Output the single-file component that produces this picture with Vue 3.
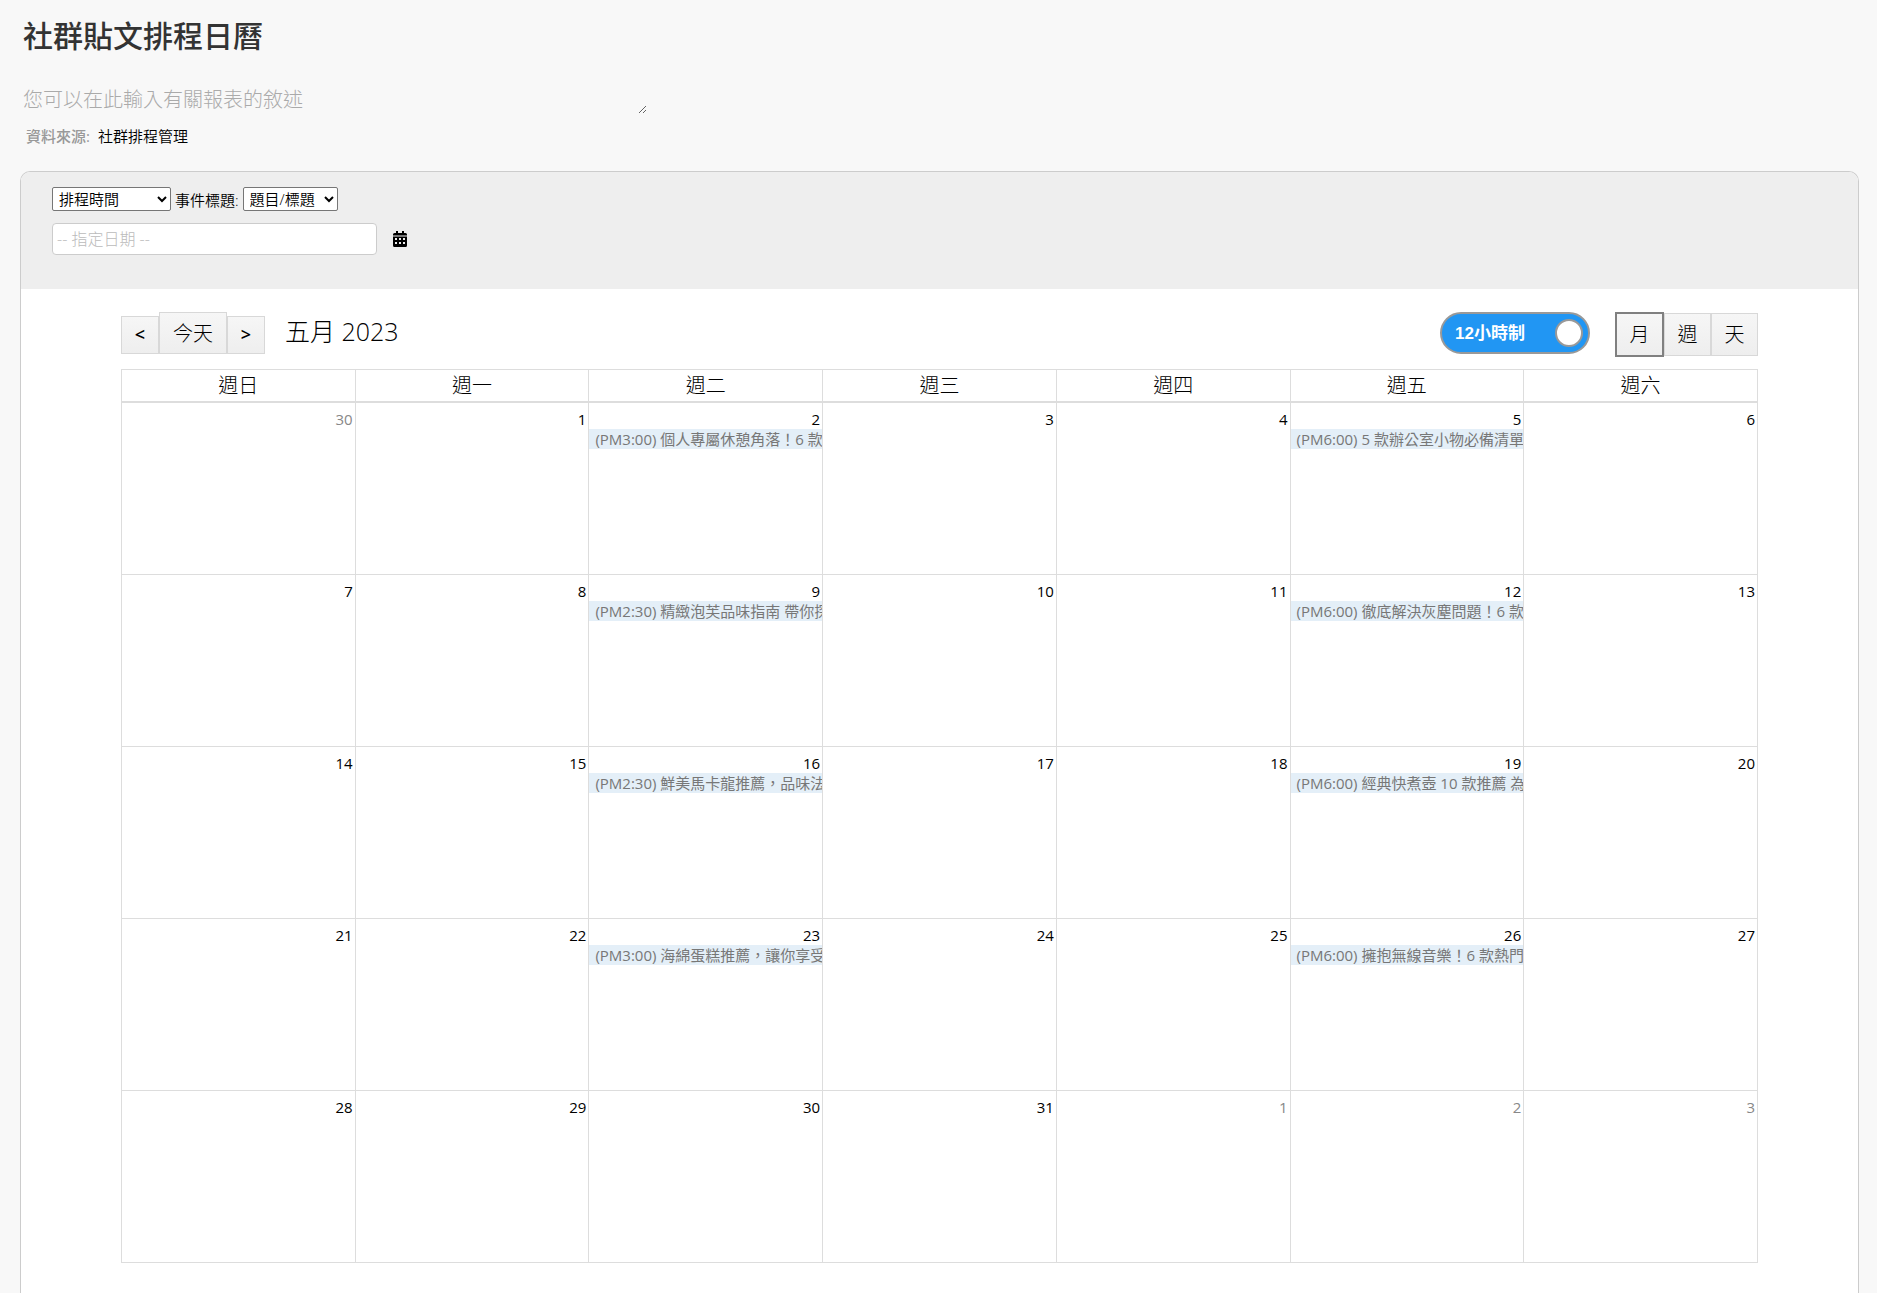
<template>
  <div class="report-page">
    <header class="report-header">
      <h1 class="report-title">社群貼文排程日曆</h1>
      <textarea
        v-model="description"
        class="report-desc"
        placeholder="您可以在此輸入有關報表的敘述"
        aria-label="報表敘述"
      ></textarea>
      <div class="report-source">
        <strong>資料來源:</strong>
        <a href="#">社群排程管理</a>
      </div>
    </header>

    <main class="panel">
      <div class="filters">
        <div class="filter-row">
          <select v-model="dateField" class="select-date" aria-label="日期欄位">
            <option>排程時間</option>
          </select>
          <label for="event-title">事件標題:</label>
          <select id="event-title" v-model="titleField" class="select-title">
            <option>題目/標題</option>
          </select>
        </div>
        <div class="filter-row">
          <input v-model="targetDate" class="date-input" type="text" placeholder="-- 指定日期 --" aria-label="指定日期">
          <button class="btn-icon" type="button" aria-label="選擇日期">
            <svg viewBox="0 0 14 16" width="14" height="16">
              <path d="M3 0h2v2h4V0h2v2h1.500a1.500 1.500 0 0 1 1.500 1.500V4H0v-.500A1.500 1.500 0 0 1 1.500 2H3z" fill="#000" />
              <path d="M0 4h14v2H0z" fill="#777" />
              <path fill-rule="evenodd" d="M0 6h14v8.500a1.500 1.500 0 0 1-1.500 1.500h-11A1.500 1.500 0 0 1 0 14.500zM2 7v2h2V7zM6 7v2h2V7zM10 7v2h2V7zM2 11v2h2v-2zM6 11v2h2v-2zM10 11v2h2v-2z" fill="#000" />
            </svg>
          </button>
        </div>
      </div>

      <section class="calendar">
        <div class="toolbar">
          <div class="nav">
            <button class="btn btn-step" type="button" aria-label="上個月">&lt;</button>
            <button class="btn btn-today" type="button">今天</button>
            <button class="btn btn-step" type="button" aria-label="下個月">&gt;</button>
            <h2 class="month-title">五月 2023</h2>
          </div>
          <div class="modes">
            <label class="switch">
              <input v-model="twelveHour" type="checkbox">
              <span class="switch-text">{{ twelveHour ? '12小時制' : '24小時制' }}</span>
              <span class="switch-knob"></span>
            </label>
            <div class="views">
              <button
                v-for="v in views"
                :key="v"
                class="btn btn-view"
                :class="{ active: v === view }"
                type="button"
                @click="view = v"
              >{{ v }}</button>
            </div>
          </div>
        </div>

        <table class="month">
          <thead>
            <tr>
              <th v-for="d in weekdays" :key="d">{{ d }}</th>
            </tr>
          </thead>
          <tbody>
            <tr v-for="(week, i) in weeks" :key="i">
              <td v-for="cell in week" :key="cell.key" :class="{ other: cell.other }">
                <div class="day">{{ cell.day }}</div>
                <div v-if="cell.event" class="event">{{ cell.event }}</div>
              </td>
            </tr>
          </tbody>
        </table>
      </section>
    </main>
  </div>
</template>

<script setup>
import { ref } from 'vue'

const description = ref('')
const dateField = ref('排程時間')
const titleField = ref('題目/標題')
const targetDate = ref('')
const twelveHour = ref(true)
const view = ref('月')

const views = ['月', '週', '天']
const weekdays = ['週日', '週一', '週二', '週三', '週四', '週五', '週六']

const EVENTS = {
  2: '(PM3:00) 個人專屬休憩角落！6 款',
  5: '(PM6:00) 5 款辦公室小物必備清單',
  9: '(PM2:30) 精緻泡芙品味指南 帶你探',
  12: '(PM6:00) 徹底解決灰塵問題！6 款',
  16: '(PM2:30) 鮮美馬卡龍推薦，品味法',
  19: '(PM6:00) 經典快煮壺 10 款推薦 為',
  23: '(PM3:00) 海綿蛋糕推薦，讓你享受',
  26: '(PM6:00) 擁抱無線音樂！6 款熱門'
}

// April 30 opens the grid, June 3 closes it
const weeks = Array.from({ length: 5 }, (_, w) =>
  Array.from({ length: 7 }, (_, d) => {
    const date = new Date(2023, 3, 30 + w * 7 + d)
    const other = date.getMonth() !== 4
    return {
      key: w * 7 + d,
      day: date.getDate(),
      other,
      event: other ? '' : EVENTS[date.getDate()]
    }
  })
)
</script>

<style>
body {
  background: #f8f8f8;
}
</style>

<style scoped>
.report-page {
  display: flex;
  flex-direction: column;
  box-sizing: border-box;
  min-height: 100vh;
  padding: 16px 18px 0 20px;
  font-family: 'Open Sans', 'Noto Sans CJK TC', sans-serif;
  font-size: 15px;
  color: #000;
}
button, input, select, textarea { font-family: inherit; color: inherit; }

.report-header { padding: 0 3px; }
.report-title {
  margin: 0;
  font-size: 30px;
  line-height: 40px;
  font-weight: 500;
  color: #333;
}
.report-desc {
  display: block;
  box-sizing: border-box;
  width: 624px;
  max-width: 100%;
  height: 36px;
  margin: 22px 0 10px;
  padding: 8px 0 0;
  border: 0;
  outline: 0;
  background: transparent;
  font-size: 20px;
  line-height: 28px;
  font-weight: 300;
  resize: both;
  overflow: hidden;
}
.report-desc::placeholder { color: #aaa; }
.report-source {
  display: flex;
  gap: 8px;
  padding-left: 3px;
  line-height: 24px;
}
.report-source strong { font-weight: 500; color: #999; }
.report-source a { color: #000; font-weight: 350; text-decoration: none; }

.panel {
  flex: 1;
  margin-top: 23px;
  border: 1px solid #ccc;
  border-bottom: 0;
  border-radius: 10px 10px 0 0;
  background: #fff;
  overflow: hidden;
}
.filters {
  display: flex;
  flex-direction: column;
  gap: 12px;
  padding: 15px 31px 34px;
  background: #eee;
}
.filter-row {
  display: flex;
  align-items: center;
  gap: 4px;
  font-weight: 350;
}
.filter-row select {
  box-sizing: border-box;
  height: 24px;
  padding: 0 2px;
  border: 1px solid #767676;
  border-radius: 2px;
  background: #fff;
  font-size: 15px;
  font-weight: 350;
}
.select-date { width: 119px; }
.select-title { width: 95px; }
.date-input {
  box-sizing: border-box;
  width: 325px;
  height: 32px;
  padding: 0 4px;
  border: 1px solid #ccc;
  border-radius: 4px;
  background: #fff;
  font-size: 16px;
  font-weight: 300;
}
.date-input::placeholder { color: #bbb; }
.btn-icon {
  display: flex;
  margin-left: 12px;
  padding: 0;
  border: 0;
  background: transparent;
  cursor: pointer;
}

.calendar { padding: 23px 100px 29px; }
.toolbar {
  display: flex;
  justify-content: space-between;
  height: 57px;
}
.nav { display: flex; align-items: flex-end; height: 42px; }
.btn {
  box-sizing: border-box;
  padding: 0 0 2px;
  border: 1px solid #d8d8d8;
  background: linear-gradient(#f6f6f6, #eee);
  font-size: 20px;
  font-weight: 300;
  cursor: pointer;
}
.btn-step { width: 38px; height: 38px; font-size: 18px; font-weight: 600; }
.btn-today { width: 68px; height: 42px; }
.month-title {
  margin: 0 0 0 20px;
  font-size: 25px;
  line-height: 46px;
  font-weight: 300;
}
.modes { display: flex; gap: 25px; }
.switch {
  display: flex;
  align-items: center;
  justify-content: space-between;
  box-sizing: border-box;
  width: 150px;
  height: 42px;
  padding: 0 5px 0 13px;
  border: 2px solid #999;
  border-radius: 21px;
  background: #2196f3;
  cursor: pointer;
}
.switch input {
  position: absolute;
  opacity: 0;
  pointer-events: none;
}
.switch-text {
  padding-bottom: 4px;
  color: #fff;
  font-family: 'Liberation Sans', 'Noto Sans CJK TC', sans-serif;
  font-size: 17px;
  font-weight: 700;
}
.switch-knob {
  box-sizing: border-box;
  width: 28px;
  height: 28px;
  border: 2px solid #999;
  border-radius: 50%;
  background: #fff;
}
.views { display: flex; align-items: center; height: 45px; }
.btn-view { width: 47px; height: 43px; }
.btn-view.active { width: 49px; height: 45px; border: 2px solid #808080; }

.month {
  width: 100%;
  border-collapse: collapse;
  table-layout: fixed;
}
.month th, .month td { padding: 0; border: 1px solid #ddd; }
.month th {
  height: 31px;
  font-size: 20px;
  line-height: 28px;
  font-weight: 300;
}
.month thead { border-bottom: 2px solid #ddd; }
.month td { height: 171px; vertical-align: top; }
.day {
  padding: 6px 2px 0 0;
  line-height: 20px;
  text-align: right;
}
.other .day { color: #888; }
.event {
  height: 20px;
  padding-left: 6px;
  background: #e4eff8;
  color: #777;
  line-height: 20px;
  white-space: nowrap;
  overflow: hidden;
}
</style>
